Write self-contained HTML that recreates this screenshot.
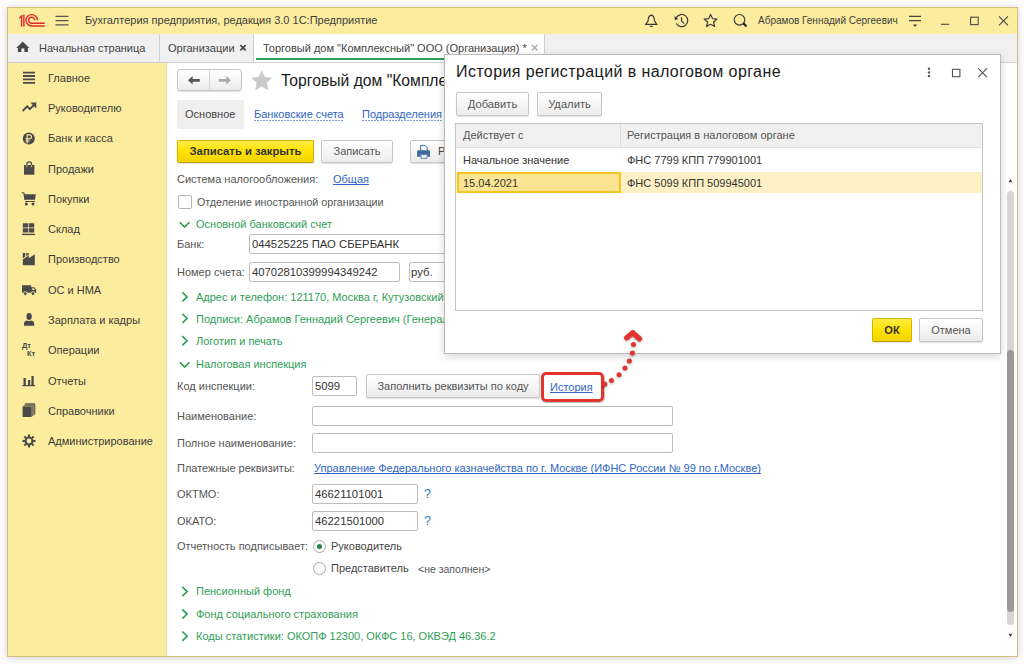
<!DOCTYPE html>
<html><head><meta charset="utf-8">
<style>
*{box-sizing:border-box;margin:0;padding:0}
html,body{width:1024px;height:664px;overflow:hidden;background:#fff;font-family:"Liberation Sans",sans-serif;font-size:11px;color:#4d4d4d}
.a{position:absolute;white-space:nowrap}
#win{position:absolute;left:7px;top:7px;width:1011px;height:650px;border:1px solid #d2c27a;background:#fff;box-shadow:0 1px 8px rgba(90,90,120,.28);overflow:hidden}
#title{position:absolute;left:8px;top:8px;width:1009px;height:26px;background:#fcec9e}
#tabs{position:absolute;left:8px;top:34px;width:1009px;height:29px;background:#f0f0f0;border-bottom:1px solid #d0d0d0}
#side{position:absolute;left:8px;top:63px;width:159px;height:593px;background:#fcec9e;border-right:1px solid #eedf9c}
.t{color:#333}
.sb{left:48px;color:#3c3c3c}
.g{color:#2f9e57}
.lnk{color:#2f66c4;text-decoration:underline;text-decoration-skip-ink:none}
.inp{position:absolute;border:1px solid #bdbdbd;border-radius:2px;background:#fff;height:20px}
.btn{position:absolute;border:1px solid #c6c6c6;border-radius:2px;background:linear-gradient(#fff,#ececec);box-shadow:0 1px 1px rgba(0,0,0,.12);text-align:center;color:#555}
.lbl{left:177px;color:#555}
svg{position:absolute;overflow:visible}
</style></head><body>
<div id="win"></div>
<div id="title"></div>
<div id="tabs"></div>
<div id="side"></div>

<!-- title bar -->
<svg style="left:0;top:0" width="1024" height="40" viewBox="0 0 1024 40">
  <g fill="none" stroke="#e0282c" stroke-width="1.4">
    <path d="M19.3 18.3 L22.3 15.3"/>
    <path d="M21.6 15.8 V26.6"/>
    <path d="M23.9 14.4 V26.6"/>
    <path d="M37.4 20.3 A5.7 5.7 0 1 0 31.7 26 H44.8"/>
    <path d="M34.7 20.3 A3 3 0 1 0 31.7 23.3 H44.8"/>
  </g>
  <g fill="none" stroke="#3c3c3c" stroke-width="1.2">
    <path d="M651.3 15.4 C648.6 15.4 648.3 18 648.2 20 C648.1 22 646.4 23.2 645.8 24.3 H656.8 C656.2 23.2 654.5 22 654.4 20 C654.3 18 654 15.4 651.3 15.4Z"/>
    <path d="M676.3 23.5 A6.1 6.1 0 1 0 676.3 17.6"/>
    <path d="M681.5 17.2 V21 L684.3 23.6"/>
    <path d="M710.6 14.4 L712.5 18.6 L717 19 L713.6 22 L714.6 26.5 L710.6 24.2 L706.6 26.5 L707.6 22 L704.2 19 L708.7 18.6Z" stroke-linejoin="round"/>
    <circle cx="739.5" cy="19.8" r="5.3"/>
  </g>
  <path d="M743.4 23.4 L746.4 26.4" stroke="#2c2c2c" stroke-width="2.2"/>
  <path d="M651.3 13.9 L652.3 15.6 H650.3Z M649.5 25.8 H653.1 A1.8 1.2 0 0 1 649.5 25.8Z" fill="#3c3c3c"/>
  <path d="M674.6 16 L678.2 19 L674.8 20.2Z" fill="#3c3c3c"/>
  <g stroke="#444" stroke-width="1.3" fill="none">
    <path d="M909 16.3 H921 M909 20.6 H921"/>
  </g>
  <g stroke="#4a4a4a" stroke-width="1.1" fill="none">
    <path d="M941 24.3 H949.2"/>
    <rect x="970.6" y="17.2" width="7.6" height="7.4"/>
    <path d="M999 16.3 L1008 25.3 M1008 16.3 L999 25.3"/>
  </g>
  <path d="M912.9 24.6 H917.2 L915.05 27Z" fill="#444"/>
</svg>
<svg style="left:55px;top:15px" width="14" height="11"><g stroke="#555" stroke-width="1.25"><path d="M0.5 1.3H13.5M0.5 5.5H13.5M0.5 9.8H13.5"/></g></svg>
<div class="a t" style="left:85px;top:14px;font-size:11px;color:#404040">Бухгалтерия предприятия, редакция 3.0 1С:Предприятие</div>

<div class="a" style="left:758px;top:15px;font-size:10px;color:#404040">Абрамов Геннадий Сергеевич</div>

<!-- tabs -->
<div class="a" style="left:159px;top:34px;width:1px;height:28px;background:#cfcfcf"></div>
<div class="a" style="left:253px;top:34px;width:292px;height:28px;background:#fff;border-left:1px solid #cfcfcf;border-right:1px solid #cfcfcf"></div>
<div class="a" style="left:256px;top:58px;width:286px;height:2px;background:#2aa052"></div>
<svg style="left:0;top:0" width="60" height="60" viewBox="0 0 60 60"><path d="M22.7 41.6 L29.3 47.9 H27.9 V51.9 H24.4 V48.4 H21.4 V51.9 H17.9 V47.9 H16.2Z" fill="#474747"/></svg>
<div class="a" style="left:39px;top:42px;color:#444">Начальная страница</div>
<div class="a" style="left:168px;top:42px;color:#444">Организации</div>
<svg style="left:0;top:0" width="560" height="60" viewBox="0 0 560 60"><path d="M240.4 45.1 L245.7 50.4 M245.7 45.1 L240.4 50.4" stroke="#444" stroke-width="1.7"/><path d="M532 45.1 L537.5 50.4 M537.5 45.1 L532 50.4" stroke="#a8a8a8" stroke-width="1.4"/></svg>
<div class="a" style="left:263px;top:42px;color:#444">Торговый дом "Комплексный" ООО (Организация) *</div>


<!-- sidebar -->
<div class="a sb" style="top:72px">Главное</div>
<div class="a sb" style="top:102px">Руководителю</div>
<div class="a sb" style="top:132px">Банк и касса</div>
<div class="a sb" style="top:163px">Продажи</div>
<div class="a sb" style="top:193px">Покупки</div>
<div class="a sb" style="top:223px">Склад</div>
<div class="a sb" style="top:253px">Производство</div>
<div class="a sb" style="top:284px">ОС и НМА</div>
<div class="a sb" style="top:314px">Зарплата и кадры</div>
<div class="a sb" style="top:344px">Операции</div>
<div class="a sb" style="top:375px">Отчеты</div>
<div class="a sb" style="top:405px">Справочники</div>
<div class="a sb" style="top:435px">Администрирование</div>

<!-- sidebar icons -->
<svg style="left:0;top:0" width="1" height="1"></svg>
<svg style="left:22px;top:71px" width="14" height="14" viewBox="0 0 14 14"><g stroke="#4a4a4a" stroke-width="1.8"><path d="M1 1.6H13M1 5H13M1 8.4H13M1 11.8H13"/></g></svg>
<svg style="left:0;top:0" width="60" height="160" viewBox="0 0 60 160"><path d="M22.6 111 L27.2 106.4 L29.8 109.2 L34 105" fill="none" stroke="#4a4a4a" stroke-width="1.9"/><path d="M30.4 102.6 H36.3 V108.5Z" fill="#4a4a4a"/></svg>
<svg style="left:0;top:0" width="60" height="160" viewBox="0 0 60 160"><circle cx="28.8" cy="138.6" r="6" fill="#4a4a4a"/><path d="M27.2 143.4 V134.9 H29.5 A1.95 1.95 0 0 1 29.5 138.8 H25.6 M25.6 141 H29.6" fill="none" stroke="#fcec9e" stroke-width="1.15"/></svg>
<svg style="left:0;top:0" width="60" height="180" viewBox="0 0 60 180"><path d="M24 165 H34.4 V174.7 H24Z" fill="#4a4a4a"/><path d="M26.9 165.5 V164.2 A2.35 2.35 0 0 1 31.6 164.2 V165.5" fill="none" stroke="#4a4a4a" stroke-width="1.3"/><path d="M26.9 165 V167.3 M31.6 165 V167.3" stroke="#c9bf86" stroke-width="1"/></svg>
<svg style="left:21px;top:191px" width="16" height="16" viewBox="0 0 16 16"><path d="M0.8 1.5 L3 2.3 L4 9" fill="none" stroke="#4a4a4a" stroke-width="1.2"/><path d="M3 3.2 H14.8 L14 8.8 H4Z" fill="#4a4a4a"/><path d="M4 10.5 H14" stroke="#4a4a4a" stroke-width="1"/><circle cx="5.3" cy="13" r="1.5" fill="#4a4a4a"/><circle cx="12" cy="13" r="1.5" fill="#4a4a4a"/></svg>
<svg style="left:0;top:0" width="60" height="240" viewBox="0 0 60 240"><path d="M22.8 223.2 H28.2 V227.6 H22.8Z M28.9 223.2 H34.2 V227.6 H28.9Z M22.8 228.3 H28.2 V232.6 H22.8Z M28.9 228.3 H34.2 V232.6 H28.9Z" fill="#4a4a4a"/><path d="M22 234.4 H35" stroke="#4a4a4a" stroke-width="1.4"/></svg>
<svg style="left:22px;top:252px" width="14" height="14" viewBox="0 0 14 14"><path d="M0.8 1 H3.2 V4.6 L0.8 6.4Z M4.3 1 H6.7 V2.6 L4.3 4.2Z M0.8 7.6 L6.8 3.2 V6.2 L12.8 2.2 V13.3 H0.8Z" fill="#4a4a4a"/></svg>
<svg style="left:0;top:0" width="60" height="300" viewBox="0 0 60 300"><path d="M22 285.2 H31.2 V292.8 H22Z M31.2 287.2 H34.2 L36.2 289.8 V292.8 H31.2Z" fill="#4a4a4a"/><path d="M32.2 288.2 H33.7 L35 289.9 H32.2Z" fill="#fcec9e"/><circle cx="25.2" cy="293.6" r="1.9" fill="#4a4a4a" stroke="#fcec9e" stroke-width=".9"/><circle cx="33" cy="293.6" r="1.9" fill="#4a4a4a" stroke="#fcec9e" stroke-width=".9"/></svg>
<svg style="left:23px;top:312px" width="13" height="15" viewBox="0 0 13 15"><ellipse cx="6.1" cy="4.5" rx="2.7" ry="3.4" fill="#4a4a4a"/><path d="M1 13.8 V11.6 C1 9.6 3 8.8 4.6 8.6 Q6.1 9.6 7.6 8.6 C9.2 8.8 11.2 9.6 11.2 11.6 V13.8Z" fill="#4a4a4a"/></svg>
<div class="a" style="left:22px;top:341px;font-size:7.5px;font-weight:bold;color:#4a4a4a;letter-spacing:-.2px">Дт</div>
<div class="a" style="left:27px;top:349px;font-size:7.5px;font-weight:bold;color:#4a4a4a;letter-spacing:-.2px">Кт</div>
<svg style="left:22px;top:374px" width="14" height="13" viewBox="0 0 14 13"><path d="M1.5 4 H3.8 V11 H1.5Z M6 6 H8.2 V11 H6Z M9.4 2 H11.7 V11 H9.4Z" fill="#4a4a4a"/><path d="M0.5 11.6 H13" stroke="#4a4a4a" stroke-width="1.2"/></svg>
<svg style="left:0;top:0" width="60" height="460" viewBox="0 0 60 460"><path d="M22.6 406.6 L25.2 403.8 H34.8 V414.4 L31.4 417 Z" fill="#8f8a66"/><path d="M25.2 403.8 H34.8 V414.4" fill="none" stroke="#555" stroke-width="1"/><path d="M27 405.5 H32.8 V415.5" fill="none" stroke="#6e6a50" stroke-width=".8"/><path d="M22.6 406.8 H31.4 V417 H22.6Z" fill="#4a4a4a"/></svg>
<svg style="left:22px;top:434px" width="14" height="14" viewBox="-7 -7 14 14"><g fill="#4a4a4a"><path d="M-1.1 -6.5 H1.1 V-4 H-1.1Z" transform="rotate(0)"/><path d="M-1.1 -6.5 H1.1 V-4 H-1.1Z" transform="rotate(45)"/><path d="M-1.1 -6.5 H1.1 V-4 H-1.1Z" transform="rotate(90)"/><path d="M-1.1 -6.5 H1.1 V-4 H-1.1Z" transform="rotate(135)"/><path d="M-1.1 -6.5 H1.1 V-4 H-1.1Z" transform="rotate(180)"/><path d="M-1.1 -6.5 H1.1 V-4 H-1.1Z" transform="rotate(225)"/><path d="M-1.1 -6.5 H1.1 V-4 H-1.1Z" transform="rotate(270)"/><path d="M-1.1 -6.5 H1.1 V-4 H-1.1Z" transform="rotate(315)"/></g><circle cx="0" cy="0" r="3.4" fill="none" stroke="#4a4a4a" stroke-width="2"/></svg>

<!-- form -->
<div class="btn" style="left:177px;top:69px;width:65px;height:22px;border-radius:3px"></div>
<div class="a" style="left:209px;top:70px;width:1px;height:20px;background:#d6d6d6"></div>
<div class="a" style="left:281px;top:72px;font-size:15.7px;color:#1a1a1a">Торговый дом "Комплексный" ООО (Организация)</div>
<div class="a" style="left:177px;top:100px;width:67px;height:29px;background:#efefef;border-radius:2px"></div>
<div class="a" style="left:185px;top:108px;color:#444">Основное</div>
<div class="a lnk" style="left:254px;top:108px;text-decoration:none">Банковские счета</div>
<div class="a" style="left:254px;top:120px;width:90px;height:1px;background:repeating-linear-gradient(90deg,#7f9fd8 0 2px,transparent 2px 3px)"></div>
<div class="a lnk" style="left:362px;top:108px;text-decoration:none">Подразделения</div>
<div class="a" style="left:362px;top:120px;width:80px;height:1px;background:repeating-linear-gradient(90deg,#7f9fd8 0 2px,transparent 2px 3px)"></div>

<div class="btn" style="left:177px;top:140px;width:137px;height:23px;background:linear-gradient(#ffeb45,#fee200 50%,#f3d300);border-color:#d2b300 #d2b300 #bfa000;font-weight:bold;color:#333;line-height:21px;font-size:11.3px">Записать и закрыть</div>
<div class="btn" style="left:321px;top:140px;width:72px;height:23px;line-height:21px">Записать</div>
<div class="btn" style="left:410px;top:140px;width:60px;height:23px"></div>
<div class="a" style="left:438px;top:145px;color:#444">Реквизиты</div>

<div class="a lbl" style="top:173px">Система налогообложения:</div>
<div class="a lnk" style="left:333px;top:173px">Общая</div>
<div class="a" style="left:178px;top:195px;width:14px;height:14px;border:1px solid #b5b5b5;border-radius:2px;background:#fff"></div>
<div class="a" style="left:197px;top:196px;font-size:10.7px;color:#555">Отделение иностранной организации</div>
<div class="a g" style="left:196px;top:218px">Основной банковский счет</div>
<div class="a lbl" style="top:238px">Банк:</div>
<div class="inp" style="left:249px;top:234px;width:260px;height:20px"></div>
<div class="a" style="left:252px;top:238px;color:#333;font-size:11.3px">044525225 ПАО СБЕРБАНК</div>
<div class="a lbl" style="top:266px">Номер счета:</div>
<div class="inp" style="left:249px;top:262px;width:151px;height:20px"></div>
<div class="a" style="left:252px;top:266px;color:#333;font-size:11.3px">40702810399994349242</div>
<div class="inp" style="left:409px;top:262px;width:60px;height:20px"></div>
<div class="a" style="left:411px;top:266px;color:#333;font-size:11.3px">руб.</div>
<div class="a g" style="left:196px;top:291px">Адрес и телефон: 121170, Москва г, Кутузовский проспект, дом 36</div>
<div class="a g" style="left:196px;top:313px">Подписи: Абрамов Геннадий Сергеевич (Генеральный директор)</div>
<div class="a g" style="left:196px;top:335px">Логотип и печать</div>
<div class="a g" style="left:196px;top:358px">Налоговая инспекция</div>
<div class="a lbl" style="top:380px">Код инспекции:</div>
<div class="inp" style="left:312px;top:376px;width:45px;height:20px"></div>
<div class="a" style="left:315px;top:380px;color:#333;font-size:11.3px">5099</div>
<div class="btn" style="left:366px;top:374px;width:174px;height:24px;line-height:22px">Заполнить реквизиты по коду</div>
<div class="a lnk" style="left:550px;top:381px">История</div>
<div class="a" style="left:541px;top:372px;width:63px;height:30px;border:3px solid #e3352d;border-radius:5px;box-shadow:.5px 1px 1px rgba(0,0,0,.25)"></div>

<div class="a lbl" style="top:410px">Наименование:</div>
<div class="inp" style="left:312px;top:406px;width:361px;height:20px"></div>
<div class="a lbl" style="top:437px">Полное наименование:</div>
<div class="inp" style="left:312px;top:433px;width:361px;height:20px"></div>
<div class="a lbl" style="top:462px">Платежные реквизиты:</div>
<div class="a lnk" style="left:314px;top:462px">Управление Федерального казначейства по г. Москве (ИФНС России № 99 по г.Москве)</div>
<div class="a lbl" style="top:488px">ОКТМО:</div>
<div class="inp" style="left:312px;top:484px;width:106px;height:20px"></div>
<div class="a" style="left:315px;top:488px;color:#333;font-size:11.3px">46621101001</div>
<div class="a" style="left:424px;top:487px;color:#2a80c8;font-size:12.5px">?</div>
<div class="a lbl" style="top:515px">ОКАТО:</div>
<div class="inp" style="left:312px;top:511px;width:106px;height:20px"></div>
<div class="a" style="left:315px;top:515px;color:#333;font-size:11.3px">46221501000</div>
<div class="a" style="left:424px;top:514px;color:#2a80c8;font-size:12.5px">?</div>
<div class="a lbl" style="top:540px">Отчетность подписывает:</div>
<div class="a" style="left:313px;top:540px;width:13px;height:13px;border:1px solid #a8a8a8;border-radius:50%"></div>
<div class="a" style="left:317px;top:544px;width:5px;height:5px;background:#1f8a4a;border-radius:50%"></div>
<div class="a" style="left:331px;top:540px;color:#444">Руководитель</div>
<div class="a" style="left:313px;top:562px;width:13px;height:13px;border:1px solid #a8a8a8;border-radius:50%"></div>
<div class="a" style="left:331px;top:562px;color:#444">Представитель</div>
<div class="a" style="left:418px;top:563px;color:#555;font-size:10.5px">&lt;не заполнен&gt;</div>
<div class="a g" style="left:196px;top:585px">Пенсионный фонд</div>
<div class="a g" style="left:196px;top:608px">Фонд социального страхования</div>
<div class="a g" style="left:196px;top:630px">Коды статистики: ОКОПФ 12300, ОКФС 16, ОКВЭД 46.36.2</div>

<svg style="left:0;top:0" width="1024" height="664" viewBox="0 0 1024 664">
  <path d="M188 80.3 L192.6 76 V78.9 H199.8 V81.7 H192.6 V84.6Z" fill="#555"/>
  <path d="M231 80.3 L226.4 76 V78.9 H218.8 V81.7 H226.4 V84.6Z" fill="#aaa"/>
  <path d="M261.70 71.00 L264.64 77.25 L271.50 78.12 L266.46 82.85 L267.75 89.63 L261.70 86.30 L255.65 89.63 L256.94 82.85 L251.90 78.12 L258.76 77.25Z" fill="#cacaca" stroke="#cacaca" stroke-width=".6" stroke-linejoin="round"/>
  <g fill="#3d6a9c"><path d="M418.5 150.2 H428.6 A1.4 1.4 0 0 1 430 151.6 V156.8 H427.4 V154.2 H420.6 V156.8 H417.1 V151.6 A1.4 1.4 0 0 1 418.5 150.2Z"/></g>
  <path d="M420.6 150.5 V145.4 H425 L427.2 147.6 V150.5" fill="none" stroke="#3d6a9c" stroke-width="1"/>
  <path d="M421 154.6 H427 V158.3 H421Z" fill="none" stroke="#3d6a9c" stroke-width=".8"/>
  <g fill="none" stroke="#2a9d55" stroke-width="1.6">
    <path d="M179.8 222.2 L184.6 227 L189.4 222.2"/>
    <path d="M179.8 362.2 L184.6 367 L189.4 362.2"/>
    <path d="M182.3 292.2 L187.1 296.9 L182.3 301.5"/>
    <path d="M182.3 313.7 L187.1 318.4 L182.3 323"/>
    <path d="M182.3 336.1 L187.1 340.8 L182.3 345.4"/>
    <path d="M182.3 586.9 L187.1 591.6 L182.3 596.2"/>
    <path d="M182.3 609.4 L187.1 614.1 L182.3 618.7"/>
    <path d="M182.3 631.5 L187.1 636.2 L182.3 640.8"/>
  </g>
</svg>

<!-- dialog -->
<div id="dlg" class="a" style="left:444px;top:54px;width:557px;height:300px;background:#fff;border:1px solid #bdbdbd;box-shadow:0 2px 8px rgba(0,0,0,.18)"></div>
<div class="a" style="left:456px;top:63px;font-size:16px;letter-spacing:.4px;color:#1a1a1a">История регистраций в налоговом органе</div>
<div class="btn" style="left:456px;top:92px;width:73px;height:24px;line-height:22px;font-size:11.2px">Добавить</div>
<div class="btn" style="left:537px;top:92px;width:65px;height:24px;line-height:22px;font-size:11.2px">Удалить</div>
<div class="a" style="left:455px;top:123px;width:528px;height:188px;border:1px solid #c4c4c4;background:#fff"></div>
<div class="a" style="left:456px;top:124px;width:526px;height:24px;background:#f0f0f0;border-bottom:1px solid #e0e0e0"></div>
<div class="a" style="left:620px;top:124px;width:1px;height:24px;background:#dcdcdc"></div>
<div class="a" style="left:463px;top:129px;color:#555">Действует с</div>
<div class="a" style="left:627px;top:129px;color:#555">Регистрация в налоговом органе</div>
<div class="a" style="left:463px;top:154px;color:#333">Начальное значение</div>
<div class="a" style="left:627px;top:154px;color:#333">ФНС 7799 КПП 779901001</div>
<div class="a" style="left:456px;top:172px;width:526px;height:21px;background:#fcf0c4"></div>
<div class="a" style="left:457px;top:172px;width:164px;height:21px;background:#fbe592;border:2px solid #f5c41e"></div>
<div class="a" style="left:463px;top:177px;color:#333">15.04.2021</div>
<div class="a" style="left:627px;top:177px;color:#333">ФНС 5099 КПП 509945001</div>
<div class="btn" style="left:872px;top:318px;width:40px;height:24px;background:linear-gradient(#ffeb45,#fee200 50%,#f3d300);border-color:#d2b300 #d2b300 #bfa000;font-weight:bold;color:#333;line-height:22px">ОК</div>
<div class="btn" style="left:919px;top:318px;width:64px;height:24px;line-height:22px">Отмена</div>

<!-- scrollbar -->
<div class="a" style="left:1007px;top:191px;width:7px;height:434px;background:#d6d6d6;border-radius:4px"></div>
<div class="a" style="left:1007px;top:350px;width:7px;height:262px;background:#9a9a9a;border-radius:4px"></div>

<svg style="left:0;top:0" width="1024" height="664" viewBox="0 0 1024 664">
  <g fill="#555"><circle cx="929" cy="68.8" r="1.2"/><circle cx="929" cy="72.4" r="1.2"/><circle cx="929" cy="76" r="1.2"/></g>
  <rect x="952.5" y="69.3" width="7.4" height="7.4" fill="none" stroke="#555" stroke-width="1.1"/>
  <path d="M978.3 68.4 L987 77.1 M987 68.4 L978.3 77.1" stroke="#555" stroke-width="1.1"/>
  <path d="M1010.5 179 L1012.5 182.2 H1008.5Z" fill="#444"/>
  <path d="M1008.5 633.8 H1012.5 L1010.5 637Z" fill="#444"/>
  <g fill="#e3352d" style="filter:drop-shadow(.5px 1px .8px rgba(0,0,0,.3))">
    <circle cx="604.6" cy="384.2" r="2.6"/>
    <circle cx="611.5" cy="380.4" r="2.5"/>
    <circle cx="619.1" cy="374.8" r="2.5"/>
    <circle cx="625" cy="368" r="2.5"/>
    <circle cx="629.4" cy="361" r="2.5"/>
    <circle cx="632.4" cy="353" r="2.5"/>
    <circle cx="633.5" cy="344.5" r="2.5"/>
  </g>
  <path d="M626.8 337.8 L632.8 332.8 L639.4 338.8" fill="none" stroke="#e3352d" stroke-width="5.4" style="filter:drop-shadow(.5px 1px .8px rgba(0,0,0,.3))" stroke-linecap="round" stroke-linejoin="round"/>
</svg>
</body></html>
